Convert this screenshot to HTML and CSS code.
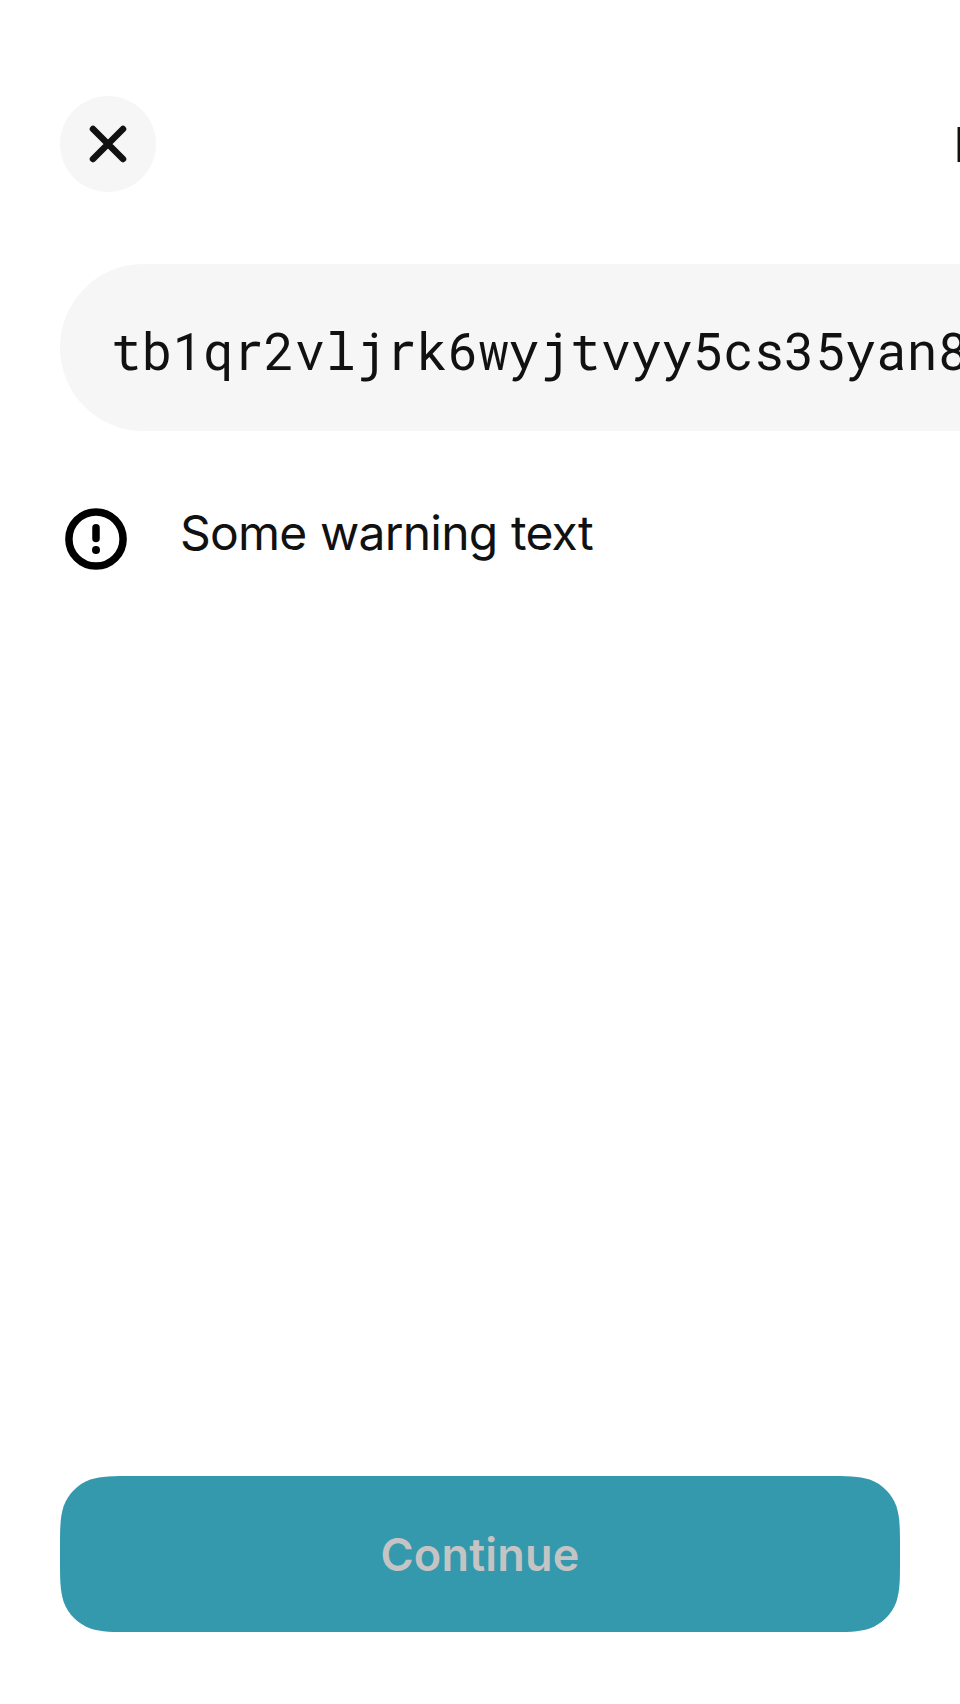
FILE: index.html
```html
<!DOCTYPE html>
<html lang="en">
<head>
<meta charset="utf-8">
<title>Send</title>
<link rel="stylesheet" href="styles.css">
</head>
<body>
<main class="screen">
  <header class="header">
    <button class="close" aria-label="Close">
      <svg class="close-icon" viewBox="0 0 96 96"><path d="M33 33 63 63M63 33 33 63"/></svg>
    </button>
    <h1 class="title">R</h1>
  </header>
  <div class="address">tb1qr2vljrk6wyjtvyy5cs35yan8</div>
  <div class="warning">
    <svg class="warning-icon" viewBox="0 0 72 72"><circle cx="36" cy="36" r="27.1"/><path d="M36 24.7V35.6"/><circle class="dot" cx="36" cy="47" r="4"/></svg>
    <p class="warning-text">Some warning text</p>
  </div>
  <button class="continue">
    <svg class="continue-shape" viewBox="0 0 840 156"><path d="M73.4 0H766.6C787.75 0 798.32 0 809.7 3.6C822.1 8.1 831.9 17.9 836.4 30.3C840 41.7 840 52.25 840 73.4V82.6C840 103.75 840 114.3 836.4 125.7C831.9 138.1 822.1 147.9 809.7 152.4C798.3 156 787.75 156 766.6 156H73.4C52.25 156 41.7 156 30.3 152.4C17.9 147.9 8.1 138.1 3.6 125.7C0 114.3 0 103.75 0 82.6V73.4C0 52.25 0 41.7 3.6 30.3C8.1 17.9 17.9 8.1 30.3 3.6C41.7 0 52.25 0 73.4 0Z"/></svg>
    <span class="continue-label">Continue</span>
  </button>
</main>
</body>
</html>
```
FILE: styles.css
```css
* { box-sizing: border-box; }
body { margin: 0; background: #fff; color: #111; font-family: Inter, sans-serif; }
button { border: 0; padding: 0; font-family: inherit; }
.screen { width: 960px; height: 1704px; padding: 96px 60px 72px; display: flex; flex-direction: column; overflow: hidden; }
.header { display: flex; align-items: center; height: 96px; }
.close { width: 96px; height: 96px; flex: none; border-radius: 50%; background: #f6f6f6; }
.close-icon { display: block; width: 96px; height: 96px; fill: none; stroke: #111; stroke-width: 6.5; stroke-linecap: round; }
.title { margin: 0 0 0 798px; padding-top: 2px; font-size: 48px; line-height: 66px; font-weight: 600; flex: none; }
.address { width: 1200px; height: 167px; margin-top: 72px; padding: 0 51px; border-radius: 84px; background: #f6f6f6; font: 51px/174px "Roboto Mono", "DejaVu Sans Mono", monospace; white-space: nowrap; }
.warning { display: flex; margin-top: 72px; }
.warning-icon { width: 72px; height: 72px; fill: none; stroke: #000; stroke-width: 7.5; stroke-linecap: round; }
.dot { fill: #000; stroke: none; }
.warning-text { margin: 0 0 0 48px; font-size: 48px; font-weight: 370; line-height: 60px; letter-spacing: -0.8px; word-spacing: 1px; }
.continue { width: 840px; height: 156px; margin-top: auto; background: none; display: grid; place-items: center; }
.continue-shape { grid-area: 1 / 1; width: 840px; height: 156px; fill: #3499ad; }
.continue-label { grid-area: 1 / 1; padding-top: 2px; font-size: 45px; line-height: 60px; font-weight: 600; letter-spacing: 0.2px; color: #c4c4c4; }
```
